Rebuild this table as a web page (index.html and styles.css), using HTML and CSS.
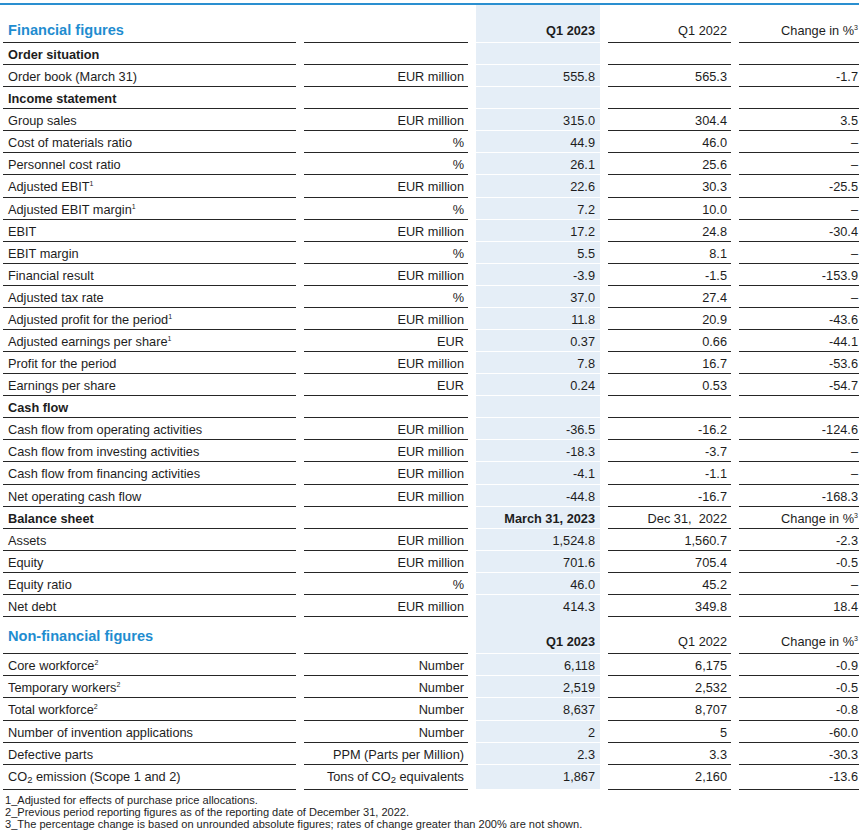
FILE: index.html
```html
<!DOCTYPE html>
<html lang="en">
<head>
<meta charset="utf-8">
<title>Financial figures</title>
<link rel="stylesheet" href="styles.css">
</head>
<body>
<div class="report">
  <div class="row row--head">
    <div class="cell label heading">Financial figures</div>
    <div class="cell unit"></div>
    <div class="cell cur strong">Q1 2023</div>
    <div class="cell prev">Q1 2022</div>
    <div class="cell chg">Change in %<sup>3</sup></div>
  </div>

  <div class="row row--section"><div class="cell label">Order situation</div><div class="cell unit"></div><div class="cell cur"></div><div class="cell prev"></div><div class="cell chg"></div></div>
  <div class="row"><div class="cell label">Order book (March 31)</div><div class="cell unit">EUR million</div><div class="cell cur">555.8</div><div class="cell prev">565.3</div><div class="cell chg">-1.7</div></div>

  <div class="row row--section"><div class="cell label">Income statement</div><div class="cell unit"></div><div class="cell cur"></div><div class="cell prev"></div><div class="cell chg"></div></div>
  <div class="row"><div class="cell label">Group sales</div><div class="cell unit">EUR million</div><div class="cell cur">315.0</div><div class="cell prev">304.4</div><div class="cell chg">3.5</div></div>
  <div class="row"><div class="cell label">Cost of materials ratio</div><div class="cell unit">%</div><div class="cell cur">44.9</div><div class="cell prev">46.0</div><div class="cell chg">–</div></div>
  <div class="row"><div class="cell label">Personnel cost ratio</div><div class="cell unit">%</div><div class="cell cur">26.1</div><div class="cell prev">25.6</div><div class="cell chg">–</div></div>
  <div class="row"><div class="cell label">Adjusted EBIT<sup>1</sup></div><div class="cell unit">EUR million</div><div class="cell cur">22.6</div><div class="cell prev">30.3</div><div class="cell chg">-25.5</div></div>
  <div class="row"><div class="cell label">Adjusted EBIT margin<sup>1</sup></div><div class="cell unit">%</div><div class="cell cur">7.2</div><div class="cell prev">10.0</div><div class="cell chg">–</div></div>
  <div class="row"><div class="cell label">EBIT</div><div class="cell unit">EUR million</div><div class="cell cur">17.2</div><div class="cell prev">24.8</div><div class="cell chg">-30.4</div></div>
  <div class="row"><div class="cell label">EBIT margin</div><div class="cell unit">%</div><div class="cell cur">5.5</div><div class="cell prev">8.1</div><div class="cell chg">–</div></div>
  <div class="row"><div class="cell label">Financial result</div><div class="cell unit">EUR million</div><div class="cell cur">-3.9</div><div class="cell prev">-1.5</div><div class="cell chg">-153.9</div></div>
  <div class="row"><div class="cell label">Adjusted tax rate</div><div class="cell unit">%</div><div class="cell cur">37.0</div><div class="cell prev">27.4</div><div class="cell chg">–</div></div>
  <div class="row"><div class="cell label">Adjusted profit for the period<sup>1</sup></div><div class="cell unit">EUR million</div><div class="cell cur">11.8</div><div class="cell prev">20.9</div><div class="cell chg">-43.6</div></div>
  <div class="row"><div class="cell label">Adjusted earnings per share<sup>1</sup></div><div class="cell unit">EUR</div><div class="cell cur">0.37</div><div class="cell prev">0.66</div><div class="cell chg">-44.1</div></div>
  <div class="row"><div class="cell label">Profit for the period</div><div class="cell unit">EUR million</div><div class="cell cur">7.8</div><div class="cell prev">16.7</div><div class="cell chg">-53.6</div></div>
  <div class="row"><div class="cell label">Earnings per share</div><div class="cell unit">EUR</div><div class="cell cur">0.24</div><div class="cell prev">0.53</div><div class="cell chg">-54.7</div></div>

  <div class="row row--section"><div class="cell label">Cash flow</div><div class="cell unit"></div><div class="cell cur"></div><div class="cell prev"></div><div class="cell chg"></div></div>
  <div class="row"><div class="cell label">Cash flow from operating activities</div><div class="cell unit">EUR million</div><div class="cell cur">-36.5</div><div class="cell prev">-16.2</div><div class="cell chg">-124.6</div></div>
  <div class="row"><div class="cell label">Cash flow from investing activities</div><div class="cell unit">EUR million</div><div class="cell cur">-18.3</div><div class="cell prev">-3.7</div><div class="cell chg">–</div></div>
  <div class="row"><div class="cell label">Cash flow from financing activities</div><div class="cell unit">EUR million</div><div class="cell cur">-4.1</div><div class="cell prev">-1.1</div><div class="cell chg">–</div></div>
  <div class="row"><div class="cell label">Net operating cash flow</div><div class="cell unit">EUR million</div><div class="cell cur">-44.8</div><div class="cell prev">-16.7</div><div class="cell chg">-168.3</div></div>

  <div class="row row--section"><div class="cell label">Balance sheet</div><div class="cell unit"></div><div class="cell cur strong">March 31, 2023</div><div class="cell prev">Dec 31,&nbsp; 2022</div><div class="cell chg">Change in %<sup>3</sup></div></div>
  <div class="row"><div class="cell label">Assets</div><div class="cell unit">EUR million</div><div class="cell cur">1,524.8</div><div class="cell prev">1,560.7</div><div class="cell chg">-2.3</div></div>
  <div class="row"><div class="cell label">Equity</div><div class="cell unit">EUR million</div><div class="cell cur">701.6</div><div class="cell prev">705.4</div><div class="cell chg">-0.5</div></div>
  <div class="row"><div class="cell label">Equity ratio</div><div class="cell unit">%</div><div class="cell cur">46.0</div><div class="cell prev">45.2</div><div class="cell chg">–</div></div>
  <div class="row"><div class="cell label">Net debt</div><div class="cell unit">EUR million</div><div class="cell cur cur--open">414.3</div><div class="cell prev">349.8</div><div class="cell chg">18.4</div></div>

  <div class="row row--head2">
    <div class="cell label heading">Non-financial figures</div>
    <div class="cell unit"></div>
    <div class="cell cur strong">Q1 2023</div>
    <div class="cell prev">Q1 2022</div>
    <div class="cell chg">Change in %<sup>3</sup></div>
  </div>
  <div class="row row--nf"><div class="cell label">Core workforce<sup>2</sup></div><div class="cell unit">Number</div><div class="cell cur">6,118</div><div class="cell prev">6,175</div><div class="cell chg">-0.9</div></div>
  <div class="row row--nf"><div class="cell label">Temporary workers<sup>2</sup></div><div class="cell unit">Number</div><div class="cell cur">2,519</div><div class="cell prev">2,532</div><div class="cell chg">-0.5</div></div>
  <div class="row row--nf"><div class="cell label">Total workforce<sup>2</sup></div><div class="cell unit">Number</div><div class="cell cur">8,637</div><div class="cell prev">8,707</div><div class="cell chg">-0.8</div></div>
  <div class="row row--nf"><div class="cell label">Number of invention applications</div><div class="cell unit">Number</div><div class="cell cur">2</div><div class="cell prev">5</div><div class="cell chg">-60.0</div></div>
  <div class="row row--nf"><div class="cell label">Defective parts</div><div class="cell unit">PPM (Parts per Million)</div><div class="cell cur">2.3</div><div class="cell prev">3.3</div><div class="cell chg">-30.3</div></div>
  <div class="row row--last"><div class="cell label">CO<sub>2</sub> emission (Scope 1 and 2)</div><div class="cell unit">Tons of CO<sub>2</sub> equivalents</div><div class="cell cur">1,867</div><div class="cell prev">2,160</div><div class="cell chg">-13.6</div></div>

  <div class="notes">
    <p>1_Adjusted for effects of purchase price allocations.</p>
    <p>2_Previous period reporting figures as of the reporting date of December 31, 2022.</p>
    <p>3_The percentage change is based on unrounded absolute figures; rates of change greater than 200% are not shown.</p>
  </div>
</div>
</body>
</html>
```

FILE: styles.css
```css
html, body {
  margin: 0;
  padding: 0;
  background: #ffffff;
}

body {
  font-family: "Liberation Sans", Arial, sans-serif;
  font-size: 12.75px;
  color: #1d1d1d;
}

.report {
  width: 859px;
  margin-top: 3px;
  border-top: 2px solid #2a8fd0;
}

.row {
  display: grid;
  grid-template-columns: 293px 164px 124px 123px 120px;
  column-gap: 8px;
  margin-left: 3px;
  height: 22.08px;
}

.cell {
  box-sizing: border-box;
  border-bottom: 1px solid #262626;
  line-height: 15px;
  padding: 4px 4px 0 0;
  text-align: right;
  white-space: nowrap;
}

.label {
  text-align: left;
  padding-left: 5px;
  padding-right: 0;
}

.cur {
  background: #e5eef7;
  background-clip: padding-box;
  border-bottom-color: transparent;
  padding-right: 5px;
}

.cur--open {
  background-clip: border-box;
  border-bottom-color: #e5eef7;
}

.chg {
  padding-right: 1px;
}

.strong,
.row--section .label {
  font-weight: bold;
}

.row--head {
  height: 38px;
}

.row--head .cell {
  padding-top: 18px;
}

.row--head2 {
  height: 37px;
}

.row--head2 .cell {
  padding-top: 17px;
}

.heading {
  font-size: 14.6px;
  font-weight: bold;
  color: #1f8dd0;
  line-height: 17px;
}

.row--head .heading {
  padding-top: 17px;
}

.row--head2 .heading {
  padding-top: 11px;
}

.row--nf {
  height: 22.2px;
}

.row--last {
  height: 25px;
}

sup {
  font-size: 7px;
  line-height: 0;
  vertical-align: 5px;
}

sub {
  font-size: 9.5px;
  line-height: 0;
  vertical-align: -2px;
}

.notes {
  margin: 4px 0 0 5px;
  font-size: 11.05px;
  line-height: 12px;
}

.notes p {
  margin: 0;
}
```
